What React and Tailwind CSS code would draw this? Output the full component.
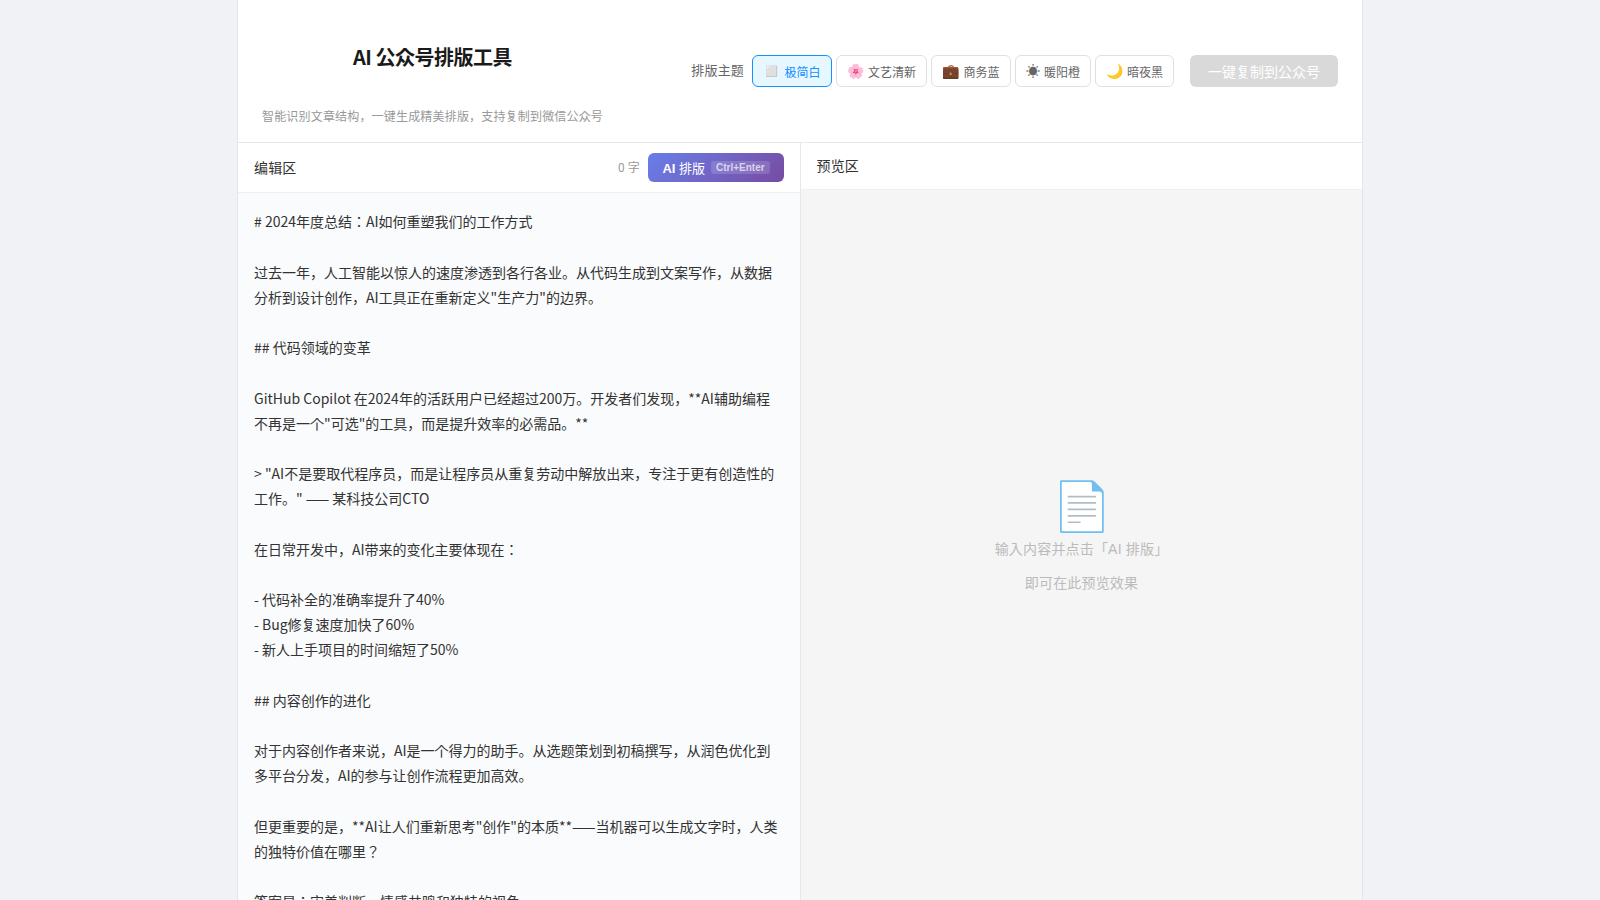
const themes = [
  ['◻️', '极简白', 'w-[80px] border-[#1890ff] bg-[#e6f7ff] text-[#1890ff]'],
  ['🌸', '文艺清新', 'w-[91px] border-[#e0e0e0] bg-white text-[#666]'],
  ['💼', '商务蓝', 'w-[80px] border-[#e0e0e0] bg-white text-[#666]'],
  ['☀', '暖阳橙', 'w-[76px] border-[#e0e0e0] bg-white text-[#666]'],
  ['🌙', '暗夜黑', 'w-[79px] border-[#e0e0e0] bg-white text-[#666]'],
];

const article = `# 2024年度总结：AI如何重塑我们的工作方式

过去一年，人工智能以惊人的速度渗透到各行各业。从代码生成到文案写作，从数据分析到设计创作，AI工具正在重新定义"生产力"的边界。

## 代码领域的变革

GitHub Copilot 在2024年的活跃用户已经超过200万。开发者们发现，**AI辅助编程不再是一个"可选"的工具，而是提升效率的必需品。**

> "AI不是要取代程序员，而是让程序员从重复劳动中解放出来，专注于更有创造性的工作。" —— 某科技公司CTO

在日常开发中，AI带来的变化主要体现在：

- 代码补全的准确率提升了40%
- Bug修复速度加快了60%
- 新人上手项目的时间缩短了50%

## 内容创作的进化

对于内容创作者来说，AI是一个得力的助手。从选题策划到初稿撰写，从润色优化到多平台分发，AI的参与让创作流程更加高效。

但更重要的是，**AI让人们重新思考"创作"的本质**——当机器可以生成文字时，人类的独特价值在哪里？

答案是：审美判断、情感共鸣和独特的视角。`;

export default function App() {
  return (
    <div className="h-[900px] overflow-hidden bg-[#f0f2f5] font-['Noto_Sans_CJK_JP','Noto_Sans_CJK_SC',sans-serif] text-[#1a1a1a]">
      <div className="mx-auto flex h-full w-[1126px] flex-col border-x border-[#e5e4e7] bg-white tracking-[0.18px]">
        <header className="flex h-[143px] shrink-0 items-center justify-between border-b border-[#e8e8e8] px-6">
          <div className="flex h-full flex-col">
            <h1 className="mt-[41px] h-8 text-center text-xl leading-8 font-bold tracking-[-0.5px]">AI 公众号排版工具</h1>
            <p className="mt-[33px] text-xs leading-5 text-[#999]">智能识别文章结构，一键生成精美排版，支持复制到微信公众号</p>
          </div>
          <div className="flex items-center gap-4">
            <div className="flex items-center gap-2">
              <span className="pb-0.5 text-[13px] text-[#666]">排版主题</span>
              <div className="flex gap-1 font-['Liberation_Sans','Noto_Sans_CJK_JP','Noto_Sans_CJK_SC',sans-serif] tracking-normal">
                {themes.map(([icon, name, look]) => (
                  <button key={name} className={'flex h-8 items-center justify-center gap-1 rounded-md border text-xs whitespace-nowrap ' + look}>
                    <span className="text-sm">{icon}</span><span className="pt-[3px]">{name}</span>
                  </button>
                ))}
              </div>
            </div>
            <button className="h-8 w-[148px] rounded-md bg-[#d9d9d9] text-sm tracking-normal text-white">一键复制到公众号</button>
          </div>
        </header>
        <main className="flex min-h-0 flex-1">
          <section className="flex w-[563px] flex-col border-r border-[#e8e8e8]">
            <div className="flex h-[50px] shrink-0 items-center justify-between border-b border-[#f0f0f0] px-4">
              <h2 className="pb-0.5 text-sm text-[#333]">编辑区</h2>
              <div className="flex items-center gap-2">
                <span className="pb-0.5 text-xs text-[#999]">0 字</span>
                <button className="flex h-[29px] w-[136px] items-center justify-center gap-1.5 rounded-md bg-linear-135 from-[#667eea] to-[#764ba2] font-['Liberation_Sans','Noto_Sans_CJK_JP','Noto_Sans_CJK_SC',sans-serif] text-[13px] tracking-normal text-white">
                  <span className="pt-0.5"><span className="font-bold">AI</span> 排版</span>
                  <kbd className="rounded-[3px] bg-white/15 px-[5px] font-['Liberation_Sans',sans-serif] text-[10px] leading-[13px] font-bold text-white/70">Ctrl+Enter</kbd>
                </button>
              </div>
            </div>
            <div className="min-h-0 flex-1 bg-[#fafbfc] pt-[16.25px] pr-[18px] pl-4 text-sm leading-[25.19px] tracking-normal whitespace-pre-wrap text-[#333]">{article}</div>
          </section>
          <section className="flex flex-1 flex-col">
            <div className="flex h-[47px] shrink-0 items-center border-b border-[#f0f0f0] pl-[15.5px]">
              <h2 className="pb-0.5 text-sm text-[#333]">预览区</h2>
            </div>
            <div className="flex flex-1 flex-col items-center justify-center bg-[#f5f5f5] pb-[22px] text-sm text-[#bbb]">
              <span className="pl-px text-5xl leading-[58px]">📄</span>
              <p className="mt-[5px] leading-[25px]">输入内容并点击「<span className="font-['Liberation_Sans',sans-serif]">AI </span>排版」</p>
              <p className="mt-2 leading-[25px]">即可在此预览效果</p>
            </div>
          </section>
        </main>
      </div>
    </div>
  );
}
